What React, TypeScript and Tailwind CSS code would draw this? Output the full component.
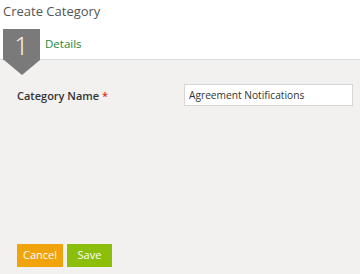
export default function App() {
  return (
    <div
      className="w-[360px] h-[274px] flex flex-col bg-white overflow-hidden"
      style={{ fontFamily: '"Open Sans", "Noto Sans", sans-serif' }}
    >
      <div className="h-[29px] pl-[3px] pt-[1px] text-[13px] leading-[20px] text-[#555]">Create Category</div>
      <div className="relative h-[30px] flex items-center">
        <div className="absolute left-[3px] top-0 w-[37px] flex flex-col items-center z-10">
          <div className="w-[37px] h-[31px] bg-[#7a7a7a] flex items-center justify-center text-white text-[25px] font-light leading-none pt-[2px]">
            1
          </div>
          <div className="w-0 h-0 border-l-[18.5px] border-r-[18.5px] border-t-[15px] border-l-transparent border-r-transparent border-t-[#7a7a7a]" />
        </div>
        <span className="ml-[45px] text-[11.5px] text-[#23893a]">Details</span>
      </div>
      <div className="flex-1 flex flex-col border-t border-[#dcdcdc] bg-[#f2f1f0] pl-[17px] pr-[7px]">
        <div className="flex items-center mt-[24px]">
          <label className="w-[167px] shrink-0 text-[11px] font-semibold text-[#333] pt-[2px]">
            Category Name <span className="text-[#d9322d]">*</span>
          </label>
          <input
            className="w-[169px] shrink-0 h-[22px] bg-white border border-[#d6d6d6] px-[4px] text-[10.2px] text-[#333] outline-none"
            defaultValue="Agreement Notifications"
          />
        </div>
        <div className="flex-1" />
        <div className="flex gap-[4px] mb-[7px]">
          <button className="w-[46px] h-[23px] bg-[#f0a30a] text-white text-[11px]">Cancel</button>
          <button className="w-[45px] h-[23px] bg-[#8cbe0c] text-white text-[11px]">Save</button>
        </div>
      </div>
    </div>
  );
}
